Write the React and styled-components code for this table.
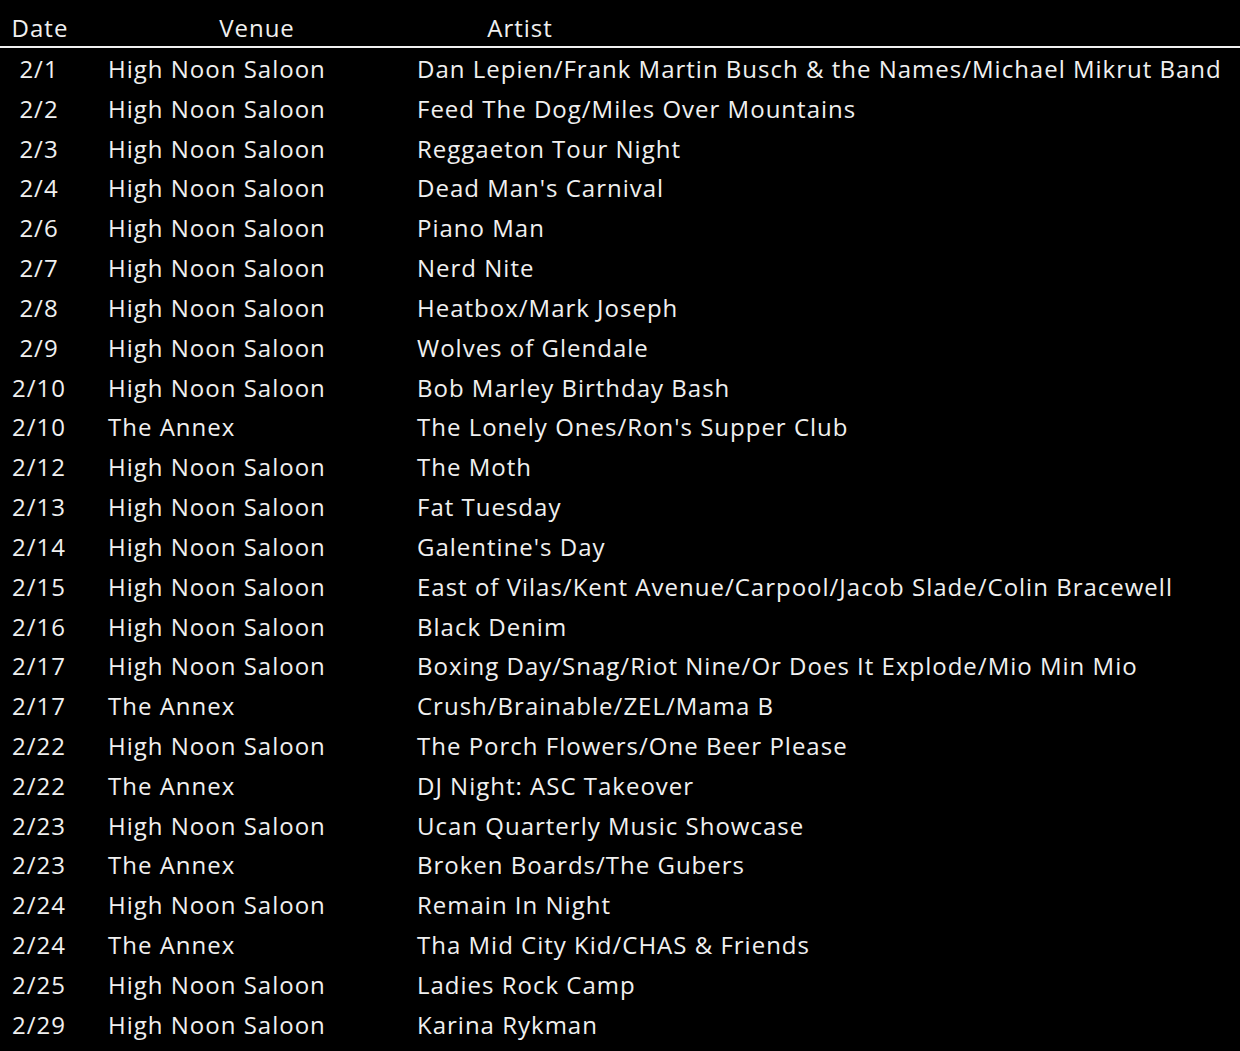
import React from 'react';
import styled, { createGlobalStyle } from "styled-components";

const shows = [
    ["2/1", "High Noon Saloon", "Dan Lepien/Frank Martin Busch & the Names/Michael Mikrut Band"],
    ["2/2", "High Noon Saloon", "Feed The Dog/Miles Over Mountains"],
    ["2/3", "High Noon Saloon", "Reggaeton Tour Night"],
    ["2/4", "High Noon Saloon", "Dead Man's Carnival"],
    ["2/6", "High Noon Saloon", "Piano Man"],
    ["2/7", "High Noon Saloon", "Nerd Nite"],
    ["2/8", "High Noon Saloon", "Heatbox/Mark Joseph"],
    ["2/9", "High Noon Saloon", "Wolves of Glendale"],
    ["2/10", "High Noon Saloon", "Bob Marley Birthday Bash"],
    ["2/10", "The Annex", "The Lonely Ones/Ron's Supper Club"],
    ["2/12", "High Noon Saloon", "The Moth"],
    ["2/13", "High Noon Saloon", "Fat Tuesday"],
    ["2/14", "High Noon Saloon", "Galentine's Day"],
    ["2/15", "High Noon Saloon", "East of Vilas/Kent Avenue/Carpool/Jacob Slade/Colin Bracewell"],
    ["2/16", "High Noon Saloon", "Black Denim"],
    ["2/17", "High Noon Saloon", "Boxing Day/Snag/Riot Nine/Or Does It Explode/Mio Min Mio"],
    ["2/17", "The Annex", "Crush/Brainable/ZEL/Mama B"],
    ["2/22", "High Noon Saloon", "The Porch Flowers/One Beer Please"],
    ["2/22", "The Annex", "DJ Night: ASC Takeover"],
    ["2/23", "High Noon Saloon", "Ucan Quarterly Music Showcase"],
    ["2/23", "The Annex", "Broken Boards/The Gubers"],
    ["2/24", "High Noon Saloon", "Remain In Night"],
    ["2/24", "The Annex", "Tha Mid City Kid/CHAS & Friends"],
    ["2/25", "High Noon Saloon", "Ladies Rock Camp"],
    ["2/29", "High Noon Saloon", "Karina Rykman"],
];

function App() {
    return (
        <>
            <GlobalStyle/>
            <Sheet>
                <HeaderRow>
                    <HeadCell>Date</HeadCell>
                    <HeadCell>Venue</HeadCell>
                    <HeadCell>Artist</HeadCell>
                </HeaderRow>
                {shows.map(([date, venue, artist], i) => (
                    <Row key={i}>
                        <DateCell>{date}</DateCell>
                        <VenueCell>{venue}</VenueCell>
                        <ArtistCell>{artist}</ArtistCell>
                    </Row>
                ))}
            </Sheet>
        </>
    )
}

export default App;

const GlobalStyle = createGlobalStyle`
    html, body {
        margin:0;
        background:#000;
    }
    body {
        font-family:"Open Sans", "Noto Sans", sans-serif;
        font-weight:500;
        color:#f0f0f0;
        letter-spacing:1px;
    }
`

const Sheet = styled.div`
    width:1240px;
    height:1051px;
    background:#000;
    overflow:hidden;
`

const HeaderRow = styled.div`
    display:grid;
    grid-template-columns:80px 354px 172px;
    height:48px;
    border-bottom:2px solid #f0f0f0;
    align-items:center;
    padding-top:8px;
    box-sizing:border-box;
`

const HeadCell = styled.div`
    font-size:24px;
    text-align:center;
    white-space:nowrap;
`

const Row = styled.div`
    display:grid;
    grid-template-columns:78px 339px 1fr;
    height:39.83px;
    align-items:center;
    font-size:24px;
    white-space:nowrap;
    padding-top:1px;
    box-sizing:border-box;
`

const DateCell = styled.div`
    text-align:center;
`

const VenueCell = styled.div`
    padding-left:30px;
`

const ArtistCell = styled.div`
`
